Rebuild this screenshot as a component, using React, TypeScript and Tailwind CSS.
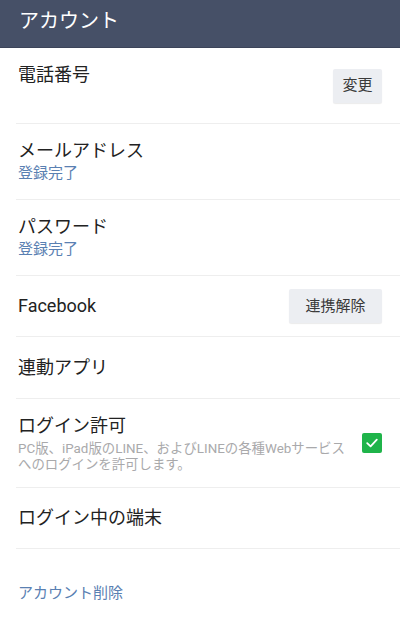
import React from "react";

const font = { fontFamily: '"Roboto", "Noto Sans CJK JP", "Noto Sans", sans-serif' };

function Btn({ children, w }: { children: React.ReactNode; w: string }) {
  return (
    <div className={`${w} h-[34px] flex items-center justify-center rounded-[2px] bg-[#eceef2] text-[15px] text-[#3a3a3a] shadow-[0_1px_1px_rgba(0,0,0,0.08)]`}>
      {children}
    </div>
  );
}

function Row({
  title,
  sub,
  right,
  twoLine,
}: {
  title: string;
  sub?: string;
  right?: React.ReactNode;
  twoLine?: boolean;
}) {
  if (twoLine) {
    return (
      <div className="ml-4 pl-[2px] pr-[18px] border-b border-[#eeeeee] flex items-center h-[76px]">
        <div className="flex-1 flex flex-col pt-[15px] pb-[16px] h-full">
          <div className="text-[18px] leading-[24px] text-[#222222]">{title}</div>
          <div className="text-[15px] leading-[20px] text-[#5a80b2]">{sub ?? "\u00a0"}</div>
        </div>
        {right}
      </div>
    );
  }
  return (
    <div className="ml-4 pl-[2px] pr-[18px] border-b border-[#eeeeee] flex items-center h-[61px]">
      <div className="flex-1 text-[18px] leading-[24px] text-[#222222]">{title}</div>
      {right}
    </div>
  );
}

export default function App() {
  return (
    <div className="w-[400px] h-[620px] bg-white overflow-hidden" style={font}>
      <div className="h-12 bg-[#465067] flex items-center pl-[19px] pb-[5px] border-b border-[#3c4459]">
        <span className="text-[20px] text-white">アカウント</span>
      </div>
      <Row title="電話番号" twoLine right={<Btn w="w-[49px]">変更</Btn>} />
      <Row title="メールアドレス" sub="登録完了" twoLine />
      <Row title="パスワード" sub="登録完了" twoLine />
      <Row title="Facebook" right={<Btn w="w-[93px]">連携解除</Btn>} />
      <div className="ml-4 pl-[2px] pr-[18px] border-b border-[#eeeeee] flex items-center h-[62px]">
        <div className="flex-1 text-[18px] leading-[24px] text-[#222222]">連動アプリ</div>
      </div>
      <div className="ml-4 pl-[2px] pr-[18px] border-b border-[#eeeeee] flex items-center h-[89px]">
        <div className="flex-1 flex flex-col">
          <div className="text-[18px] leading-[24px] text-[#222222]">ログイン許可</div>
          <div className="mt-[3px] text-[13.4px] leading-[16px] text-[#a9a9ab] whitespace-nowrap">
            <div>PC版、iPad版のLINE、およびLINEの各種Webサービス</div>
            <div>へのログインを許可します。</div>
          </div>
        </div>
        <div className="w-5 h-5 rounded-[2px] bg-[#1fb44a] flex items-center justify-center">
          <svg width="14" height="14" viewBox="0 0 14 14" fill="none">
            <path d="M2.2 7.2 L5.6 10.4 L11.8 3.6" stroke="white" strokeWidth="1.8" strokeLinecap="round" strokeLinejoin="round" />
          </svg>
        </div>
      </div>
      <Row title="ログイン中の端末" />
      <div className="pl-[18px] pt-[34px] text-[15px] leading-[20px] text-[#5a80b2]">アカウント削除</div>
    </div>
  );
}
